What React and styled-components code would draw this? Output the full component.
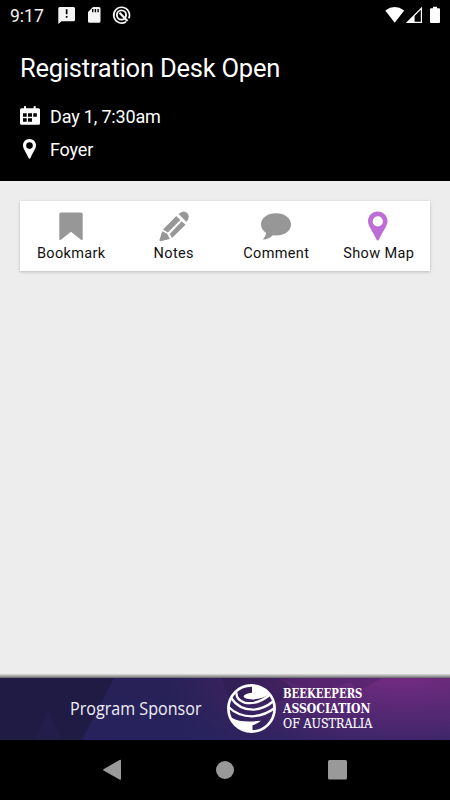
import styled, { createGlobalStyle } from "styled-components";

const GlobalStyle = createGlobalStyle`
    * {
        box-sizing: border-box;
    }
    body {
        margin: 0;
        background: #000;
        font-family: Roboto, "Liberation Sans", sans-serif;
    }
    svg {
        display: block;
    }
`;

const Page = styled.div`
    display: flex;
    flex-direction: column;
    width: 450px;
    height: 800px;
    overflow: hidden;
    background: #ededed;
`;

const StatusBar = styled.div`
    display: flex;
    justify-content: space-between;
    height: 32px;
    background: #000;
    color: #f2f2f2;
`;
const StatusLeft = styled.div`
    display: flex;
    padding-left: 10px;
`;
const Clock = styled.div`
    width: 48px;
    font-size: 17.5px;
    line-height: 32px;
    white-space: nowrap;
`;

const Header = styled.header`
    height: 149px;
    padding: 18px 20px 0;
    background: #000;
    color: #fff;
`;
const Title = styled.h1`
    margin: 0;
    font-size: 25.5px;
    font-weight: 400;
    line-height: 36px;
    letter-spacing: -0.22px;
    white-space: nowrap;
`;
const DetailRow = styled.div`
    display: flex;
    align-items: center;
    height: 34px;
    font-size: 18px;
    line-height: 34px;
    letter-spacing: -0.17px;

    ${Title} + & {
        margin-top: 13px;
    }
`;
const DetailIcon = styled.div`
    width: 30px;
    padding-left: ${(props) => (props.$narrow ? "3px" : 0)};
    padding-bottom: ${(props) => (props.$narrow ? "2px" : 0)};
`;
const DetailText = styled.div`
    padding-top: ${(props) => (props.$raised ? 0 : "2px")};
`;

const Content = styled.main`
    flex: 1;
    padding: 20px;
`;
const ActionCard = styled.div`
    display: grid;
    grid-template-columns: repeat(4, 1fr);
    height: 70px;
    background: #fff;
    box-shadow: 0 1px 3px rgba(0, 0, 0, 0.22);
`;
const ActionButton = styled.button`
    display: flex;
    flex-direction: column;
    align-items: center;
    padding: 9px 0 0;
    border: none;
    background: none;
    color: ${(props) => props.$color || "#979797"};
    font-family: inherit;
    cursor: pointer;
`;
const ActionLabel = styled.span`
    margin-top: 2px;
    color: #111;
    font-size: 14.5px;
    line-height: 19px;
    letter-spacing: 0.35px;
    white-space: nowrap;
`;

const BannerShade = styled.div`
    height: 4px;
    background: linear-gradient(180deg, #dcdcdc, #a5a5a5 50%, #66656b);
`;
const SponsorBanner = styled.div`
    position: relative;
    display: flex;
    height: 62px;
    background: linear-gradient(180deg, rgba(39, 36, 100, 0) 10%, rgba(39, 36, 100, 0.45) 100%),
        radial-gradient(
            ellipse 240px 120px at 405px 0,
            #702b80 0%,
            #5f2976 40%,
            rgba(67, 35, 97, 0.7) 70%,
            rgba(39, 33, 87, 0) 100%
        ),
        linear-gradient(90deg, #272157 50%, #46256a 100%);
    color: #fff;
`;
const BannerArt = styled.svg`
    position: absolute;
    top: 0;
    left: 0;
`;
const SponsorCaption = styled.div`
    position: relative;
    width: 227px;
    padding-left: 70px;
    color: #f0eef5;
    font-family: "Open Sans", sans-serif;
    font-size: 18px;
    line-height: 61px;
    white-space: nowrap;

    span {
        display: inline-block;
        transform: scaleX(0.895);
        transform-origin: left;
    }
`;
const SponsorLogo = styled.div`
    position: relative;
    display: flex;
    padding-top: 6px;
`;
const SponsorName = styled.div`
    padding: 3px 0 0 7px;
`;
const NameLine = styled.div`
    height: 15px;
    font-family: "DejaVu Serif", serif;
    font-size: 12px;
    font-weight: ${(props) => (props.$light ? 400 : 700)};
    line-height: 15px;
    white-space: nowrap;
    -webkit-text-stroke: ${(props) => (props.$light ? "0.15px" : 0)} #fff;
    transform: scaleX(${(props) => props.$scale});
    transform-origin: left;
`;

const NavBar = styled.nav`
    display: grid;
    grid-template-columns: repeat(3, 113px);
    justify-content: center;
    justify-items: center;
    align-items: center;
    height: 60px;
    padding-right: 1px;
    background: #000;
`;

function NotificationIcons() {
    return (
        <svg width="80" height="32" viewBox="58 0 80 32" fill="#f5f5f5">
            <path
                fillRule="evenodd"
                d="M59.700 7h13.800q1.500 0 1.500 1.500v11.200q0 1.500-1.500 1.500H61.500L58.300 24V8.500Q58.300 7 59.700 7ZM65.800 9.300v5h1.700v-5ZM65.800 16v1.800h1.700V16Z"
            />
            <path
                fillRule="evenodd"
                d="M93 7h6q1.500 0 1.500 1.500v12.800q0 1.500-1.500 1.500h-9.500Q88 22.800 88 21.300V12ZM92 9v3.200h1.400V9ZM94.700 9v3.200h1.400V9ZM97.400 9v3.200h1.400V9Z"
            />
            <g fill="none" stroke="#f5f5f5">
                <path d="M126 21.700A7.900 7.900 0 1 1 128.800 18.400" strokeWidth="1.700" />
                <circle cx="121.500" cy="15" r="4.600" strokeWidth="1.900" />
                <path d="M119.500 12.800l8 8.200" strokeWidth="2.200" />
            </g>
        </svg>
    );
}

function SystemIcons() {
    return (
        <svg width="65" height="32" viewBox="385 0 65 32" fill="#fff">
            <path d="M385.300 10.500Q394.700 3.700 404.200 10.500L394.700 22.800Z" />
            <path
                fillRule="evenodd"
                d="M422 6.800V23H405.800ZM420.800 9.800L414.600 16V21.800H420.800Z"
            />
            <path d="M433 6.700h4v1.600h2q1 0 1 1V22q0 1-1 1h-8q-1 0-1-1V9.300q0-1 1-1h2Z" />
        </svg>
    );
}

function CalendarIcon() {
    return (
        <svg width="20" height="20" viewBox="0 0 20 20">
            <path
                fill="#fff"
                fillRule="evenodd"
                d="M1.500 2.300H4V.8q0-.8.800-.8h.5q.8 0 .8.800v1.500h7.500V.8q0-.8.800-.8h.5q.8 0 .8.800v1.500h2.800q1.500 0 1.500 1.500v13.400q0 1.500-1.500 1.500h-17Q0 18.700 0 17.200V3.800Q0 2.300 1.500 2.300ZM3 7.300v3.400h3.700v-3.400ZM8 7.300v3.400h4v-3.400ZM13.300 7.300v3.400h3.500v-3.400ZM3 12.300v3.400h3.700v-3.400ZM8 12.300v3.400h4v-3.400Z"
            />
        </svg>
    );
}

function PinIcon() {
    return (
        <svg width="13" height="20" viewBox="0 0 13 20">
            <path
                fill="currentColor"
                fillRule="evenodd"
                d="M6.500 0C10.200 0 13 2.800 13 6.400C13 9.800 9.500 13.500 7.600 18.800Q6.500 20.800 5.400 18.800C3.500 13.500 0 9.800 0 6.400C0 2.800 2.800 0 6.500 0ZM6.500 3.300A3.300 3.300 0 1 0 6.500 9.900A3.300 3.300 0 1 0 6.500 3.300Z"
            />
        </svg>
    );
}

function BookmarkIcon() {
    return (
        <svg width="24" height="32" viewBox="0 0 24 32" fill="currentColor">
            <path d="M2 2.500H22Q23.700 2.500 23.700 4.200V28.500Q23.700 31.200 21.700 29.500L12 21.800L2.300 29.500Q.3 31.200.3 28.500V4.200Q.3 2.500 2 2.500Z" />
        </svg>
    );
}

function PencilIcon() {
    return (
        <svg width="30" height="32" viewBox="0 0 30 32" fill="currentColor">
            <path d="M19.500 4Q24.500-.6 28.300 3Q31.600 7 27.500 12Z" />
            <path d="M17.300 6L21.300 10L8.800 22.400L4 19.600Z" />
            <path d="M22.700 11.200L26.500 14.800L13 28L10.700 23.900Z" />
            <path d="M3.200 21.300L8.200 23.800L10.900 29L1.600 31.200Q.2 31.300.5 29.800Z" />
        </svg>
    );
}

function CommentIcon() {
    return (
        <svg width="30" height="32" viewBox="0 0 30 32" fill="currentColor">
            <path d="M15 3.300C23.500 3.300 30 8 30 14.500C30 21 23.500 25.500 15 25.500L12 25.300C9 28 5.500 29.700 2.500 29.500Q2 29.300 2.300 28.700Q4.800 26.500 5.200 23C2 21 0 18 0 14.500C0 8 6.500 3.300 15 3.300Z" />
        </svg>
    );
}

function MapIcon() {
    return (
        <svg width="24" height="32" viewBox="0 0 24 32">
            <path
                fill="currentColor"
                fillRule="evenodd"
                d="M10.700 1.500C16.200 1.500 20.500 5.800 20.500 11.200C20.500 16 15.300 22 12.300 29Q10.800 32 9.200 29C6.200 22 1 16 1 11.200C1 5.800 5.200 1.500 10.700 1.500ZM10.800 6.300A5.100 5.100 0 1 0 10.800 16.500A5.100 5.100 0 1 0 10.800 6.300Z"
            />
        </svg>
    );
}

function GlobeLogo() {
    return (
        <svg width="49" height="50" viewBox="0 0 49 50">
            <circle cx="24.500" cy="24.500" r="23.100" fill="none" stroke="#fff" strokeWidth="2.700" />
            <g fill="#fff">
                <path d="M25 2.300Q37 3 42 10C38 13.500 32 15.400 25.500 15.400Q17 15 16.500 12.200Q18 9.500 25 8.800Z" />
                <path d="M2 31.500Q7 36.500 17 37.300Q25 37.700 34 36.800Q31 39.500 25.500 41.300V48Q8 47.500 2 31.500Z" />
            </g>
            <g fill="none" stroke="#fff" strokeWidth="2.300">
                <path d="M9.500 8.500Q8.800 15.500 17.500 18.600Q30 21.300 42.500 11" />
                <path d="M4.500 14.500Q12 25.600 26 25.600Q37 25 46 17.500" />
                <path d="M1.500 23Q11 32.300 25 32.300Q38 31.700 47.500 24" />
            </g>
        </svg>
    );
}

const ACTIONS = [
    { label: "Bookmark", icon: <BookmarkIcon /> },
    { label: "Notes", icon: <PencilIcon /> },
    { label: "Comment", icon: <CommentIcon /> },
    { label: "Show Map", icon: <MapIcon />, color: "#be6dd6" },
];

function Sponsor() {
    return (
        <SponsorBanner>
            <BannerArt width="450" height="62" viewBox="0 0 450 62">
                <path d="M0 0H114L82 62H0Z" fill="#1f1b44" />
                <path d="M48 31L62 62H35Z" fill="#221d4a" />
                <path d="M222 0H280L300 16L270 26L228 18Z" fill="#201642" opacity="0.3" />
                <path d="M280 0H382L359 13L350 4L318 15Z" fill="#301650" opacity="0.22" />
            </BannerArt>
            <SponsorCaption>
                <span>Program Sponsor</span>
            </SponsorCaption>
            <SponsorLogo>
                <GlobeLogo />
                <SponsorName>
                    <NameLine $scale={0.845}>BEEKEEPERS</NameLine>
                    <NameLine $scale={0.905}>ASSOCIATION</NameLine>
                    <NameLine $scale={0.93} $light>
                        OF AUSTRALIA
                    </NameLine>
                </SponsorName>
            </SponsorLogo>
        </SponsorBanner>
    );
}

function App() {
    return (
        <Page>
            <GlobalStyle />
            <StatusBar>
                <StatusLeft>
                    <Clock>9:17</Clock>
                    <NotificationIcons />
                </StatusLeft>
                <SystemIcons />
            </StatusBar>
            <Header>
                <Title>Registration Desk Open</Title>
                <DetailRow>
                    <DetailIcon>
                        <CalendarIcon />
                    </DetailIcon>
                    <DetailText>Day 1, 7:30am</DetailText>
                </DetailRow>
                <DetailRow>
                    <DetailIcon $narrow>
                        <PinIcon />
                    </DetailIcon>
                    <DetailText $raised>Foyer</DetailText>
                </DetailRow>
            </Header>
            <Content>
                <ActionCard>
                    {ACTIONS.map((action) => (
                        <ActionButton key={action.label} $color={action.color}>
                            {action.icon}
                            <ActionLabel>{action.label}</ActionLabel>
                        </ActionButton>
                    ))}
                </ActionCard>
            </Content>
            <BannerShade />
            <Sponsor />
            <NavBar>
                <svg width="20" height="22" viewBox="0 0 20 22">
                    <path
                        d="M1.500 10.200L17.500 1Q19 .3 19 1.500V20Q19 21.200 17.500 20.500L1.500 11.400Q.5 10.800 1.500 10.200Z"
                        fill="#999"
                    />
                </svg>
                <svg width="18" height="18" viewBox="0 0 18 18">
                    <circle cx="9" cy="9" r="9" fill="#999" />
                </svg>
                <svg width="19" height="20" viewBox="0 0 19 20">
                    <rect width="19" height="19.500" rx="1.500" fill="#999" />
                </svg>
            </NavBar>
        </Page>
    );
}

export default App;
